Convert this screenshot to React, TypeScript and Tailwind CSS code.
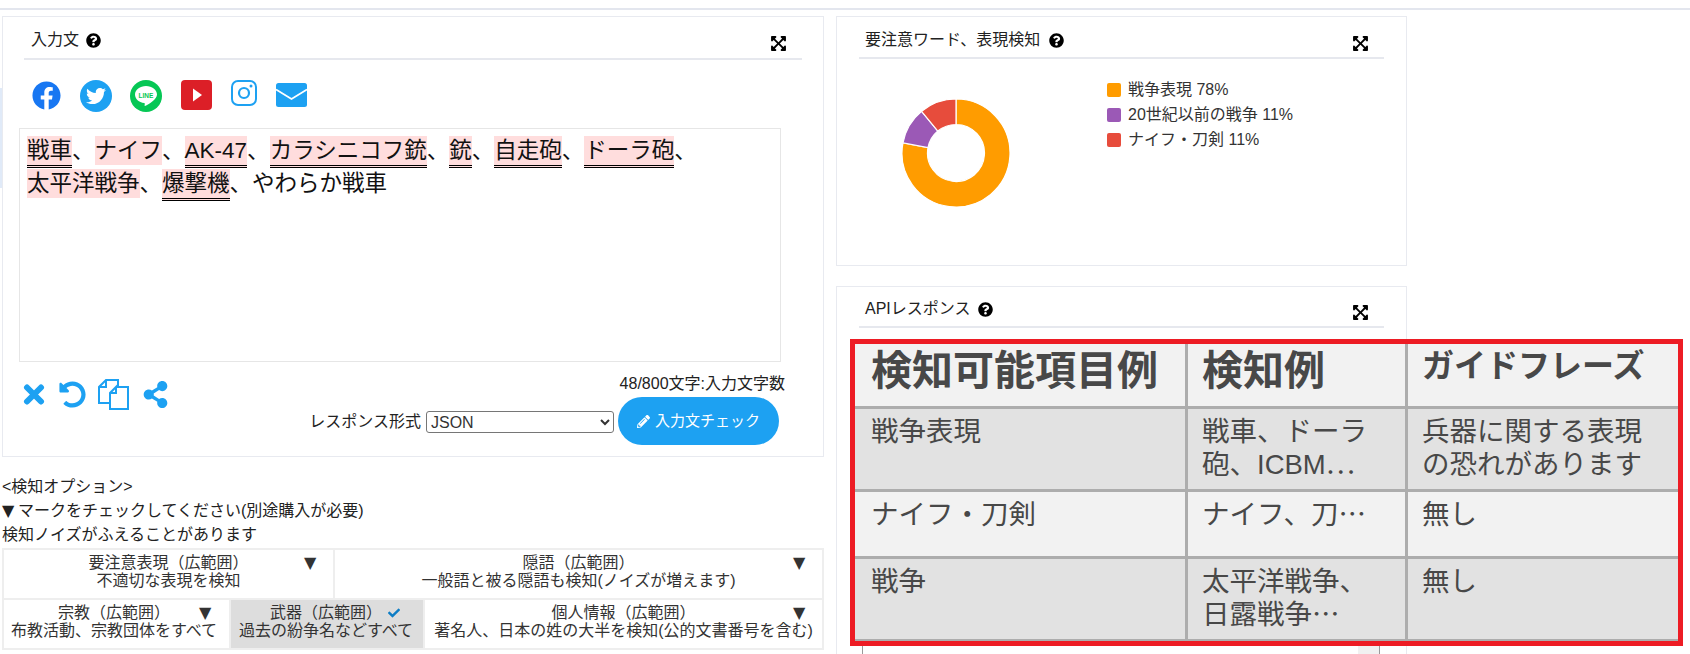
import React from "react";
import { FaQuestionCircle, FaExpandArrowsAlt, FaFacebook, FaTwitter, FaUndoAlt, FaShareAlt, FaPencilAlt, FaCheck } from "react-icons/fa";

function Mark({ children, line = false }: { children: React.ReactNode; line?: boolean }) {
  return (
    <span className={line ? "box-content inline-block h-[29px] border-b-[3px] border-double border-black bg-[#ffdddd] align-top" : "inline-block h-[29px] bg-[#ffdddd] align-top"}>
      {children}
    </span>
  );
}

function Header({ title, pb, left = "gap-[7px] pl-[7px]" }: { title: string; pb: string; left?: string }) {
  return (
    <div className={`flex items-start justify-between border-b-2 border-[#e6e8ee] pt-[11px] pr-[15px] text-[#222] ${pb}`}>
      <div className={`flex h-6 items-center leading-6 ${left}`}>
        <span>{title}</span>
        <FaQuestionCircle className="h-[15px] w-[15px] text-black" />
      </div>
      <FaExpandArrowsAlt className="mt-[7px] h-[17px] w-[17px] text-black" />
    </div>
  );
}

function Option({ title, body, width, mark = "▼", shift = "", arrow, grey = false }: { title: string; body: string; width: string; mark?: string; shift?: string; arrow: string; grey?: boolean }) {
  return (
    <div className={`relative flex h-[48px] flex-col items-center pt-1 text-[16px] leading-[18px] text-[#333] ${width} ${grey ? "bg-[#dddddd]" : ""} ${shift}`}>
      <div>{title}</div>
      <div className="whitespace-nowrap">{body}</div>
      {mark === "check" ? (
        <FaCheck className={`absolute top-[7px] h-3 w-3 text-[#0d7dc5] ${arrow}`} />
      ) : (
        <span className={`absolute top-[4px] text-[16px] leading-[18px] text-[#333] [font-family:'DejaVu_Sans',sans-serif] ${arrow}`}>▼</span>
      )}
    </div>
  );
}

function Cell({ children, bg, head, pl = "pl-4" }: { children: React.ReactNode; bg: string; head?: string; pl?: string }) {
  return <div className={`overflow-hidden pr-2 ${pl} ${bg} ${head ?? "pt-[5.5px] text-[27.5px] leading-[33px] font-normal"}`}>{children}</div>;
}

const pi = Math.PI;
function seg(a0: number, a1: number) {
  const R = 54, r = 28.5, c = 54;
  const p = (rad: number, a: number) => `${(c + rad * Math.sin(a)).toFixed(2)} ${(c - rad * Math.cos(a)).toFixed(2)}`;
  const large = a1 - a0 > pi ? 1 : 0;
  return `M${p(R, a0)}A${R} ${R} 0 ${large} 1 ${p(R, a1)}L${p(r, a1)}A${r} ${r} 0 ${large} 0 ${p(r, a0)}Z`;
}

export default function App() {
  const legend = [
    ["bg-[#ff9c00]", "戦争表現 78%"],
    ["bg-[#9b59b6]", "20世紀以前の戦争 11%"],
    ["bg-[#e74c3c]", "ナイフ・刀剣 11%"],
  ];
  return (
    <div className="relative h-[654px] w-[1690px] overflow-hidden bg-white text-[16px] text-[#222] [font-family:'Liberation_Sans','Noto_Sans_CJK_JP',sans-serif]">
      <div className="mt-2 h-[2px] w-full bg-[#e3e6ee]" />
      <div className="absolute left-0 top-[88px] h-[100px] w-[2px] bg-[#e0eaf8]" />
      <div className="mt-[6px] flex items-start pl-[2px]">
        {/* left column */}
        <div className="w-[822px]">
          <div className="h-[441px] border border-[#e8eaf0]">
            <div className="mx-[21px]">
              <Header title="入力文" pb="pb-[6px]" />
            </div>
            <div className="ml-[29px] mt-5 flex h-[31px] items-start gap-[19px]">
              <FaFacebook className="mt-px h-[29px] w-[29px] text-[#1877f2]" />
              <span className="flex h-8 w-8 items-center justify-center rounded-full bg-[#1da1f2]">
                <FaTwitter className="h-5 w-5 text-white" />
              </span>
              <svg viewBox="0 0 32 32" className="-ml-px h-8 w-8">
                <circle cx="16" cy="16" r="16" fill="#06c755" />
                <path d="M16 6c-6 0-11 3.8-11 8.6 0 4.300 3.900 7.900 9.200 8.500.8.200.6 1 .4 2.300 0 .5.400.7 1 .4 3.500-1.700 11.400-6.400 11.400-11.200C27 9.800 22 6 16 6z" fill="#fff" />
                <text x="16" y="17.500" textAnchor="middle" fontSize="6.500" fontWeight="700" fill="#06c755">LINE</text>
              </svg>
              <svg viewBox="0 0 31 30" className="h-[30px] w-[31px]">
                <rect width="31" height="30" rx="4" fill="#dc1f27" />
                <path d="M12 8.500l9 6.500-9 6.500z" fill="#fff" />
              </svg>
              <svg viewBox="0 0 26 26" className="h-[26px] w-[26px]">
                <rect x="1" y="1" width="24" height="24" rx="6" fill="none" stroke="#1da1f2" strokeWidth="2" />
                <circle cx="13" cy="13" r="5" fill="none" stroke="#1da1f2" strokeWidth="2.200" />
                <circle cx="20" cy="6" r="1.500" fill="#1da1f2" />
              </svg>
              <svg viewBox="0 0 31 24" className="mt-[3px] h-6 w-[31px]">
                <rect width="31" height="24" rx="2.500" fill="#1da1f2" />
                <path d="M0 6.500l15.500 9.500L31 6.500" fill="none" stroke="#fff" strokeWidth="1.800" />
              </svg>
            </div>
            <div className="ml-4 mt-[17px] h-[234px] w-[762px] border border-[#e6e6e6] pl-[7px] pt-[7px] text-[22.5px] leading-[29px] text-[#111]">
              <div className="h-[33px] whitespace-nowrap">
                <Mark line>戦車</Mark>、<Mark>ナイフ</Mark>、<Mark line>AK-47</Mark>、<Mark line>カラシニコフ銃</Mark>、<Mark line>銃</Mark>、<Mark line>自走砲</Mark>、<Mark line>ドーラ砲</Mark>、
              </div>
              <div className="h-[33px] whitespace-nowrap">
                <Mark>太平洋戦争</Mark>、<Mark line>爆撃機</Mark>、やわらか戦車
              </div>
            </div>
            <div className="flex items-start justify-between pr-[38px]">
              <div className="ml-5 mt-[17px] flex items-center text-[#1da1f2]">
                <svg viewBox="0 0 22 21" className="h-[27px] w-[22px]" fill="none" stroke="#1da1f2" strokeWidth="6" strokeLinecap="round">
                  <path d="M4 3.500L18 17.500M18 3.500L4 17.500" />
                </svg>
                <FaUndoAlt className="ml-[14px] h-[27px] w-[27px]" />
                <svg viewBox="0 0 31 31" className="ml-3 h-[31px] w-[31px]" fill="none" stroke="#1da1f2" strokeWidth="2">
                  <path d="M8 1H20V7M12 24H1V8L8 1V8H1" />
                  <path d="M18 8H30V30H12V14L18 8V14H12" />
                </svg>
                <FaShareAlt className="ml-[13px] h-[27px] w-[27px]" />
              </div>
              <div className="mt-[10px] flex flex-col items-end">
                <div className="h-6 leading-6 text-[#222]">48/800文字:入力文字数</div>
                <div className="mt-px flex items-center pr-[6px]">
                  <span className="mr-[2px] mt-[2px] text-[#222]">レスポンス形式</span>
                  <select className="ml-[3px] mt-[2px] h-[22px] w-[188px] rounded-[3px] border border-[#767676] bg-white text-[16px] text-[#333]">
                    <option>JSON</option>
                  </select>
                  <button className="ml-1 flex h-[48px] w-[161px] items-center justify-center gap-[5px] rounded-full bg-[#1da1f2] text-[15px] text-white">
                    <FaPencilAlt className="h-[13px] w-[13px]" />
                    入力文チェック
                  </button>
                </div>
              </div>
            </div>
          </div>
          <div className="mt-[18px] leading-6 text-[#222]">
            <div>&lt;検知オプション&gt;</div>
            <div><span className="inline-block w-4 [font-family:'DejaVu_Sans',sans-serif]">▼</span>マークをチェックしてください(別途購入が必要)</div>
            <div>検知ノイズがふえることがあります</div>
          </div>
          <div className="mt-px flex w-[822px] border-x-2 border-t-2 border-[#eeeeee]">
            <Option width="w-[329px]" title="要注意表現（広範囲）" body="不適切な表現を検知" arrow="left-[300px]" />
            <div className="w-[2px] bg-[#eeeeee]" />
            <Option width="flex-1" title="隠語（広範囲）" body="一般語と被る隠語も検知(ノイズが増えます)" arrow="left-[458px]" />
          </div>
          <div className="flex w-[822px] border-2 border-[#eeeeee]">
            <Option width="w-[225px]" shift="pr-[5px]" title="宗教（広範囲）" body="布教活動、宗教団体をすべて" arrow="left-[195px]" />
            <div className="w-[2px] bg-[#eeeeee]" />
            <Option width="w-[192px]" shift="pr-[2px]" grey mark="check" title="武器（広範囲）" body="過去の紛争名などすべて" arrow="left-[157px]" />
            <div className="w-[2px] bg-[#eeeeee]" />
            <Option width="flex-1" title="個人情報（広範囲）" body="著名人、日本の姓の大半を検知(公的文書番号を含む)" arrow="left-[368px]" />
          </div>
        </div>
        {/* right column */}
        <div className="ml-3 w-[571px]">
          <div className="h-[250px] border border-[#e8eaf0]">
            <div className="mx-[22px]">
              <Header title="要注意ワード、表現検知" pb="pb-[5px]" left="gap-[9px] pl-[6px]" />
            </div>
            <div className="flex items-start">
              <svg viewBox="0 0 108 108" className="ml-[65px] mt-10 h-[108px] w-[108px]">
                <path d={seg(0, 0.78 * 2 * pi)} fill="#ff9c00" stroke="#fff" strokeWidth="1.200" />
                <path d={seg(0.78 * 2 * pi, 0.89 * 2 * pi)} fill="#9b59b6" stroke="#fff" strokeWidth="1.200" />
                <path d={seg(0.89 * 2 * pi, 2 * pi)} fill="#e74c3c" stroke="#fff" strokeWidth="1.200" />
              </svg>
              <div className="ml-[97px] mt-[18px]">
                {legend.map(([c, t]) => (
                  <div key={t} className="flex h-[25px] items-center gap-[7px] text-[#333]">
                    <span className={`h-[14px] w-[14px] rounded-[2px] ${c}`} />
                    <span>{t}</span>
                  </div>
                ))}
              </div>
            </div>
          </div>
          <div className="mt-5 h-[420px] border border-[#e8eaf0]">
            <div className="mx-[22px]">
              <div className="-mt-px">
                <Header title="APIレスポンス" pb="pb-[5px]" left="gap-[8px] pl-[6px]" />
              </div>
            </div>
            <div className="ml-[25px] mt-3 flex h-[330px] w-[518px] justify-end border-x border-[#999999]">
              <div className="w-[21px] bg-[#f1f1f1]" />
            </div>
          </div>
        </div>
      </div>
      {/* pasted table overlay */}
      <div className="absolute left-[850px] top-[339px] w-[833px] border-[5px] border-[#ed1c24] bg-[#adadad] text-[#484848]">
        <div className="grid grid-cols-[330px_217px_1fr] grid-rows-[62px_80px_64px_80px] gap-[3px] pb-[2px]">
          <Cell bg="bg-[#f2f2f2]" head="pt-[4px] text-[41px] leading-[46px] font-bold">検知可能項目例</Cell>
          <Cell bg="bg-[#f2f2f2]" pl="pl-[14px]" head="pt-[4px] text-[41px] leading-[46px] font-bold">検知例</Cell>
          <Cell bg="bg-[#f2f2f2]" pl="pl-[14px]" head="pt-[3px] text-[32px] leading-[38px] font-bold">ガイドフレーズ</Cell>
          <Cell bg="bg-[#e2e2e2]">戦争表現</Cell>
          <Cell bg="bg-[#e2e2e2]" pl="pl-[14px]">戦車、ドーラ砲、ICBM⋯</Cell>
          <Cell bg="bg-[#e2e2e2]" pl="pl-[14px]">兵器に関する表現<br />の恐れがあります</Cell>
          <Cell bg="bg-[#f2f2f2]">ナイフ・刀剣</Cell>
          <Cell bg="bg-[#f2f2f2]" pl="pl-[14px]">ナイフ、刀⋯</Cell>
          <Cell bg="bg-[#f2f2f2]" pl="pl-[14px]">無し</Cell>
          <Cell bg="bg-[#e2e2e2]">戦争</Cell>
          <Cell bg="bg-[#e2e2e2]" pl="pl-[14px]">太平洋戦争、<br />日露戦争⋯</Cell>
          <Cell bg="bg-[#e2e2e2]" pl="pl-[14px]">無し</Cell>
        </div>
      </div>
    </div>
  );
}
